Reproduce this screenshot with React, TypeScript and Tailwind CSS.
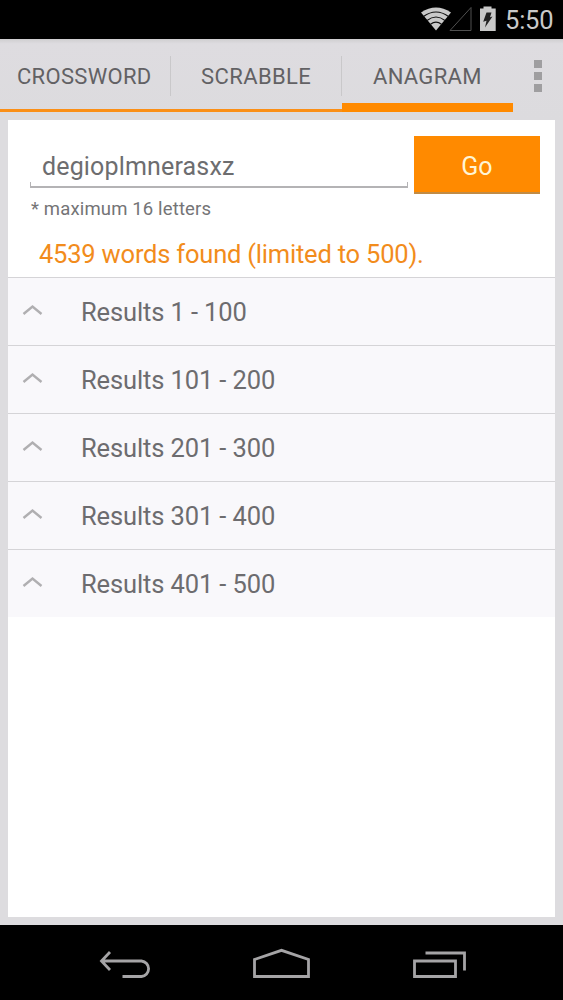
import React from "react";

const results = ["1 - 100", "101 - 200", "201 - 300", "301 - 400", "401 - 500"];

function StatusBar() {
  return (
    <header className="flex h-[39px] shrink-0 items-start bg-black">
      <svg className="ml-[420px] h-[39px] w-[80px] shrink-0" viewBox="420 0 80 39" fill="none">
        <path d="M421 12.500 Q436 2.500 451 12.500 L436 30.500Z" fill="#c9c9c9" />
        <path d="M423.500 16.500 Q436 7.500 448.500 16.500 M427 20.500 Q436 13.500 445 20.500 M430.500 24.300 Q436 20 441.500 24.300" stroke="#111" strokeWidth="1.100" />
        <path d="M450 30.500 H471 V7.500Z" stroke="#505050" strokeWidth="1" />
        <path d="M480 8.500h3.500V6.500h8v2h4.200V31H480Z" fill="#c9c9c9" />
        <path d="M486.500 12.500h5l-1.500 4.800 2.500-.8-7.500 11 1.500-6.700-3.300 1Z" fill="#222" />
      </svg>
      <time className="ml-[5px] mt-[7px] whitespace-nowrap text-[25.500px] leading-[26px] tracking-[-0.2px] text-[#c9c9c9]">5:50</time>
    </header>
  );
}

function Tabs() {
  return (
    <div className="flex h-[81px] shrink-0 bg-gradient-to-b from-[#cfced0] via-[#dedce0] via-[6%] to-[#dcdbde] text-[22px] leading-[26px] text-[#626164]">
      <nav className="flex h-[73px] w-[513px]">
        <button className="flex w-[171px] border-b-[3px] border-[#fa8f17] pt-[25px]">
          <span className="ml-[17px] w-[153px] whitespace-nowrap text-left tracking-[0.3px]">CROSSWORD</span>
          <i className="-mt-[8px] h-[40px] w-px bg-[#c9c8ca]" />
        </button>
        <button className="flex w-[171px] border-b-[3px] border-[#fa8f17] pt-[25px]">
          <span className="ml-[30px] w-[140px] whitespace-nowrap text-left tracking-[0.4px]">SCRABBLE</span>
          <i className="-mt-[8px] h-[40px] w-px bg-[#c9c8ca]" />
        </button>
        <button className="flex w-[171px] border-b-[9px] border-[#ff8a00] pt-[25px]">
          <span className="ml-[31px] whitespace-nowrap text-left tracking-[0.3px]">ANAGRAM</span>
        </button>
      </nav>
      <button aria-label="Menu" className="ml-[21px] flex h-[74px] flex-col gap-[4px] pt-[21px]">
        <i className="h-[8px] w-[8px] bg-[#9f9ea0]" />
        <i className="h-[8px] w-[8px] bg-[#9f9ea0]" />
        <i className="h-[8px] w-[8px] bg-[#9f9ea0]" />
      </button>
    </div>
  );
}

function SearchForm() {
  return (
    <section className="h-[157px] shrink-0">
      <div className="flex h-[74px] pt-[16px]">
        <div className="ml-[22px] w-[378px]">
          <div className="h-[46px] whitespace-nowrap pl-[12px] pt-[16px] text-[25px] leading-[30px] tracking-[0.16px] text-[#6d6d6f]">degioplmnerasxz</div>
          <div className="h-[6px] border-x border-b-2 border-[#b4b3b5]" />
        </div>
        <button className="ml-[6px] h-[58px] w-[126px] border-b-2 border-[#c18b45] bg-[#ff8a00] pt-[6px] text-[25px] leading-[30px] text-[#fff5d5]">Go</button>
      </div>
      <p className="ml-[23px] mt-[4px] whitespace-nowrap text-[18.500px] leading-[22px] tracking-[0.15px] text-[#747476]">* maximum 16 letters</p>
      <p className="ml-[31px] mt-[19px] whitespace-nowrap text-[25.500px] leading-[30px] tracking-[-0.21px] text-[#f28c1c]">4539 words found (limited to 500).</p>
    </section>
  );
}

function NavBar() {
  return (
    <footer className="h-[75px] shrink-0 bg-black">
      <svg className="h-[75px] w-full" viewBox="0 925 563 75" fill="none" stroke="#a5a4a6" strokeWidth="2.800">
        <path d="M110 952 101.500 961 110 970 M102 961H141.500A8 7.800 0 0 1 141.500 976.500H122.500" />
        <path d="M254.500 976.500V959.500L281.500 950.300 308.500 959.500V976.500Z" />
        <path d="M414.500 961H455.500V976.500H414.500Z M425.500 953H464.500V970.500" />
      </svg>
    </footer>
  );
}

export default function App() {
  return (
    <div className="flex h-[1000px] w-[563px] flex-col overflow-hidden bg-[#dddcdf] font-['Roboto','Liberation_Sans',sans-serif]">
      <StatusBar />
      <Tabs />
      <main className="mx-[8px] mb-[8px] flex min-h-0 grow flex-col bg-white">
        <SearchForm />
        {results.map((range) => (
          <div key={range} className="flex h-[68px] shrink-0 border-t border-[#d5d4d7] bg-[#f9f8fb]">
            <svg className="ml-[14px] mt-[25px] h-[14px] w-[22px]" viewBox="0 0 22 14" fill="none">
              <path d="M1.500 11 10.500 3.500 19.500 11" stroke="#b0afb1" strokeWidth="2.400" />
            </svg>
            <span className="ml-[37px] mt-[19px] whitespace-nowrap text-[25.500px] leading-[30px] tracking-[-0.12px] text-[#6d6c6f]">Results {range}</span>
          </div>
        ))}
      </main>
      <NavBar />
    </div>
  );
}
